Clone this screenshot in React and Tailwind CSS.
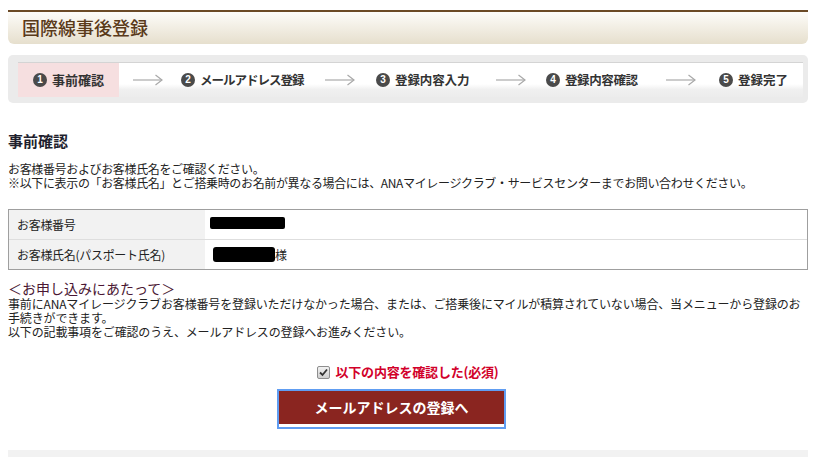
import React from "react";

const FONT = { fontFamily: '"Noto Sans CJK JP", "Noto Sans", sans-serif' };

function Num({ n }) {
  return (
    <span className="w-[14px] h-[14px] rounded-full bg-[#4a4a4a] text-white text-[10px] font-bold leading-none flex items-center justify-center shrink-0 [font-family:'Liberation_Sans',Arial,sans-serif]">
      {n}
    </span>
  );
}

function Arrow() {
  return (
    <svg width="30" height="12" viewBox="0 0 30 12" className="shrink-0">
      <line x1="0" y1="6" x2="29" y2="6" stroke="#a9a9a9" strokeWidth="1.2" />
      <polyline points="22.5,1 29,6 22.5,11" fill="none" stroke="#a9a9a9" strokeWidth="1.2" />
    </svg>
  );
}

function Step({ n, label, w, cls }) {
  return (
    <div className="flex items-center gap-[5px] shrink-0" style={{ width: w }}>
      <Num n={n} />
      <span className={"text-[12.5px] font-bold text-[#333] whitespace-nowrap " + cls}>{label}</span>
    </div>
  );
}

export default function App() {
  return (
    <div className="w-[840px] h-[457px] overflow-hidden bg-white text-[#222]" style={FONT}>
      <div className="w-[800px] ml-2">
        {/* Header */}
        <div className="mt-[10px] border-t-2 border-[#6b4a26] rounded-b-[6px] h-[34px] bg-gradient-to-b from-[#fdfcf9] to-[#e6dfcd] flex items-center pl-[14px]">
          <h1 className="text-[18px] font-medium text-[#5a3a1a] leading-none mt-[-3px]">国際線事後登録</h1>
        </div>

        {/* Steps */}
        <div className="mt-[11px] bg-[#ebebeb] rounded-[5px] pt-[7px] pb-[6px] pl-[10px] pr-[5px]">
          <div className="h-[35px] border-t border-[#d4d4d4] flex items-stretch bg-[linear-gradient(to_bottom,#ffffff_0%,#ffffff_62%,#f0f0f0_78%,#ececec_100%)]">
            <div className="w-[101px] bg-[#f6dfe0] flex items-center pl-[15px] gap-[5px] shrink-0">
              <Num n="1" />
              <span className="text-[13px] font-bold text-[#333] whitespace-nowrap">事前確認</span>
            </div>
            <div className="w-[62px] flex items-center pl-[14px] shrink-0"><Arrow /></div>
            <Step n="2" label="メールアドレス登録" w={144} cls="tracking-[-1px]" />
            <div className="w-[51px] flex items-center shrink-0"><Arrow /></div>
            <Step n="3" label="登録内容入力" w={120} cls="tracking-[-0.1px]" />
            <div className="w-[50px] flex items-center shrink-0"><Arrow /></div>
            <Step n="4" label="登録内容確認" w={120} cls="tracking-[-0.4px]" />
            <div className="w-[53px] flex items-center shrink-0"><Arrow /></div>
            <Step n="5" label="登録完了" w={80} cls="tracking-[0px]" />
          </div>
        </div>

        {/* Section heading */}
        <h2 className="mt-[28px] text-[15px] font-bold leading-[20px] text-[#1f1f2e]">事前確認</h2>

        <div className="mt-[11px] text-[12px] leading-[14px] tracking-[-0.35px] whitespace-nowrap">
          <p>お客様番号およびお客様氏名をご確認ください。</p>
          <p>※以下に表示の「お客様氏名」とご搭乗時のお名前が異なる場合には、ANAマイレージクラブ・サービスセンターまでお問い合わせください。</p>
        </div>

        {/* Table */}
        <div className="mt-[19px] border border-[#9f9f9f] text-[12px]">
          <div className="flex h-[30px] border-b border-[#dedede]">
            <div className="w-[196px] bg-[#f2f2f2] flex items-center pl-[8px] tracking-[-0.3px]">お客様番号</div>
            <div className="flex-1 flex items-center pl-[5px]">
              <span className="block w-[75px] h-[12px] bg-black rounded-[2px] mt-[-3px]"></span>
            </div>
          </div>
          <div className="flex h-[29px]">
            <div className="w-[196px] bg-[#f2f2f2] flex items-center pl-[8px] tracking-[-0.3px]">お客様氏名(パスポート氏名)</div>
            <div className="flex-1 flex items-center pl-[8px]">
              <span className="block w-[62px] h-[15px] bg-black rounded-[3px]"></span>
              <span>様</span>
            </div>
          </div>
        </div>

        {/* Notes */}
        <h3 className="mt-[9px] text-[14px] leading-[18px] text-[#4a1733]">＜お申し込みにあたって＞</h3>
        <div className="text-[12px] leading-[14px] tracking-[-0.15px] whitespace-nowrap">
          <p>事前にANAマイレージクラブお客様番号を登録いただけなかった場合、または、ご搭乗後にマイルが積算されていない場合、当メニューから登録のお</p>
          <p>手続きができます。</p>
          <p>以下の記載事項をご確認のうえ、メールアドレスの登録へお進みください。</p>
        </div>

        {/* Checkbox */}
        <div className="mt-[25px] h-[16px] flex items-center justify-center gap-[5px]">
          <span className="w-[13px] h-[13px] rounded-[2px] border border-[#8e8e8e] bg-gradient-to-b from-[#f2f2f2] to-[#cfcfcf] flex items-center justify-center">
            <svg width="9" height="9" viewBox="0 0 9 9">
              <polyline points="1,4.5 3.5,7 8,1.5" fill="none" stroke="#333" strokeWidth="1.8" />
            </svg>
          </span>
          <span className="text-[13px] font-bold text-[#d2002a] tracking-[-0.2px]">以下の内容を確認した(必須)</span>
        </div>

        {/* Button */}
        <button className="mt-[9px] ml-[269px] w-[229px] h-[40px] border-2 border-[#609df2] bg-white p-0 flex flex-col">
          <span className="h-[33px] w-full bg-[#8a2520] text-white text-[14px] font-bold flex items-center justify-center">メールアドレスの登録へ</span>
        </button>

        {/* Bottom bar */}
        <div className="mt-[21px] h-[20px] bg-[#f2f2f2]"></div>
      </div>
    </div>
  );
}
